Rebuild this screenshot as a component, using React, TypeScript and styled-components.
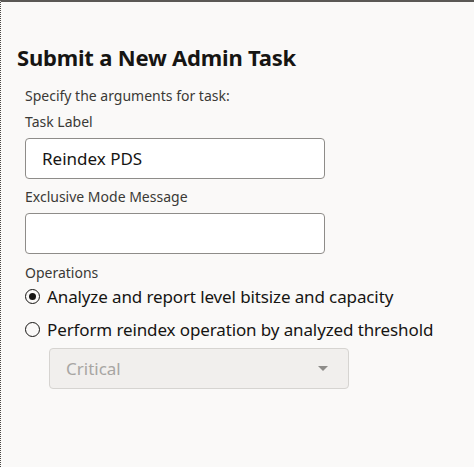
import React from "react";
import styled, { createGlobalStyle } from "styled-components";

const GlobalStyle = createGlobalStyle`
  html, body {
    margin: 0;
    padding: 0;
    background: #faf9f8;
  }
  body {
    font-family: "Noto Sans", "Open Sans", sans-serif;
    color: #161513;
  }
`;

const Dialog = styled.div`
  box-sizing: border-box;
  width: 474px;
  height: 467px;
  background: #faf9f8;
  border-top: 2px solid #5a5855;
  border-left: 1px dotted #4a4845;
  padding: 40px 0 0 16px;
`;

const Title = styled.h1`
  margin: 0 0 14px;
  font-size: 22px;
  font-weight: 700;
  line-height: 30px;
  letter-spacing: -0.2px;
`;

const Body = styled.div`
  padding-left: 8px;
  display: flex;
  flex-direction: column;
`;

const Label = styled.div<{ $gapAfter?: number }>`
  font-size: 14px;
  line-height: 20px;
  color: #3b3936;
  margin-bottom: ${(p) => p.$gapAfter ?? 6}px;
`;

const Input = styled.div<{ $gapAfter?: number }>`
  box-sizing: border-box;
  width: 300px;
  height: 41px;
  background: #fff;
  border: 1px solid #8e8c89;
  border-radius: 4px;
  padding: 0 16px;
  display: flex;
  align-items: center;
  font-size: 17px;
  color: #161513;
  margin-bottom: ${(p) => p.$gapAfter ?? 8}px;
`;

const RadioRow = styled.label`
  display: flex;
  align-items: center;
  gap: 7px;
  height: 33px;
  font-size: 17px;
  letter-spacing: -0.12px;
  color: #161513;
`;

const RadioDot = styled.span<{ $checked?: boolean }>`
  box-sizing: border-box;
  width: 15px;
  height: 15px;
  border-radius: 50%;
  border: 1.5px solid #161513;
  display: flex;
  align-items: center;
  justify-content: center;
  &::after {
    content: "";
    width: 7px;
    height: 7px;
    border-radius: 50%;
    background: ${(p) => (p.$checked ? "#161513" : "transparent")};
  }
`;

const Select = styled.div`
  box-sizing: border-box;
  width: 300px;
  height: 41px;
  margin: 2px 0 0 24px;
  background: #f1efed;
  border: 1px solid #d6d4d1;
  border-radius: 4px;
  padding: 0 16px;
  display: flex;
  align-items: center;
  justify-content: space-between;
  font-size: 17px;
  color: #a8a6a3;
`;

const Caret = styled.span`
  width: 0;
  height: 0;
  border-left: 5px solid transparent;
  border-right: 5px solid transparent;
  border-top: 5px solid #8e8c89;
  margin-right: 4px;
`;

export default function App() {
  return (
    <>
      <GlobalStyle />
      <Dialog>
        <Title>Submit a New Admin Task</Title>
        <Body>
          <Label>Specify the arguments for task:</Label>
          <Label>Task Label</Label>
          <Input>Reindex PDS</Input>
          <Label>Exclusive Mode Message</Label>
          <Input $gapAfter={9} />
          <Label $gapAfter={-3}>Operations</Label>
          <RadioRow>
            <RadioDot $checked />
            Analyze and report level bitsize and capacity
          </RadioRow>
          <RadioRow>
            <RadioDot />
            Perform reindex operation by analyzed threshold
          </RadioRow>
          <Select>
            Critical
            <Caret />
          </Select>
        </Body>
      </Dialog>
    </>
  );
}
